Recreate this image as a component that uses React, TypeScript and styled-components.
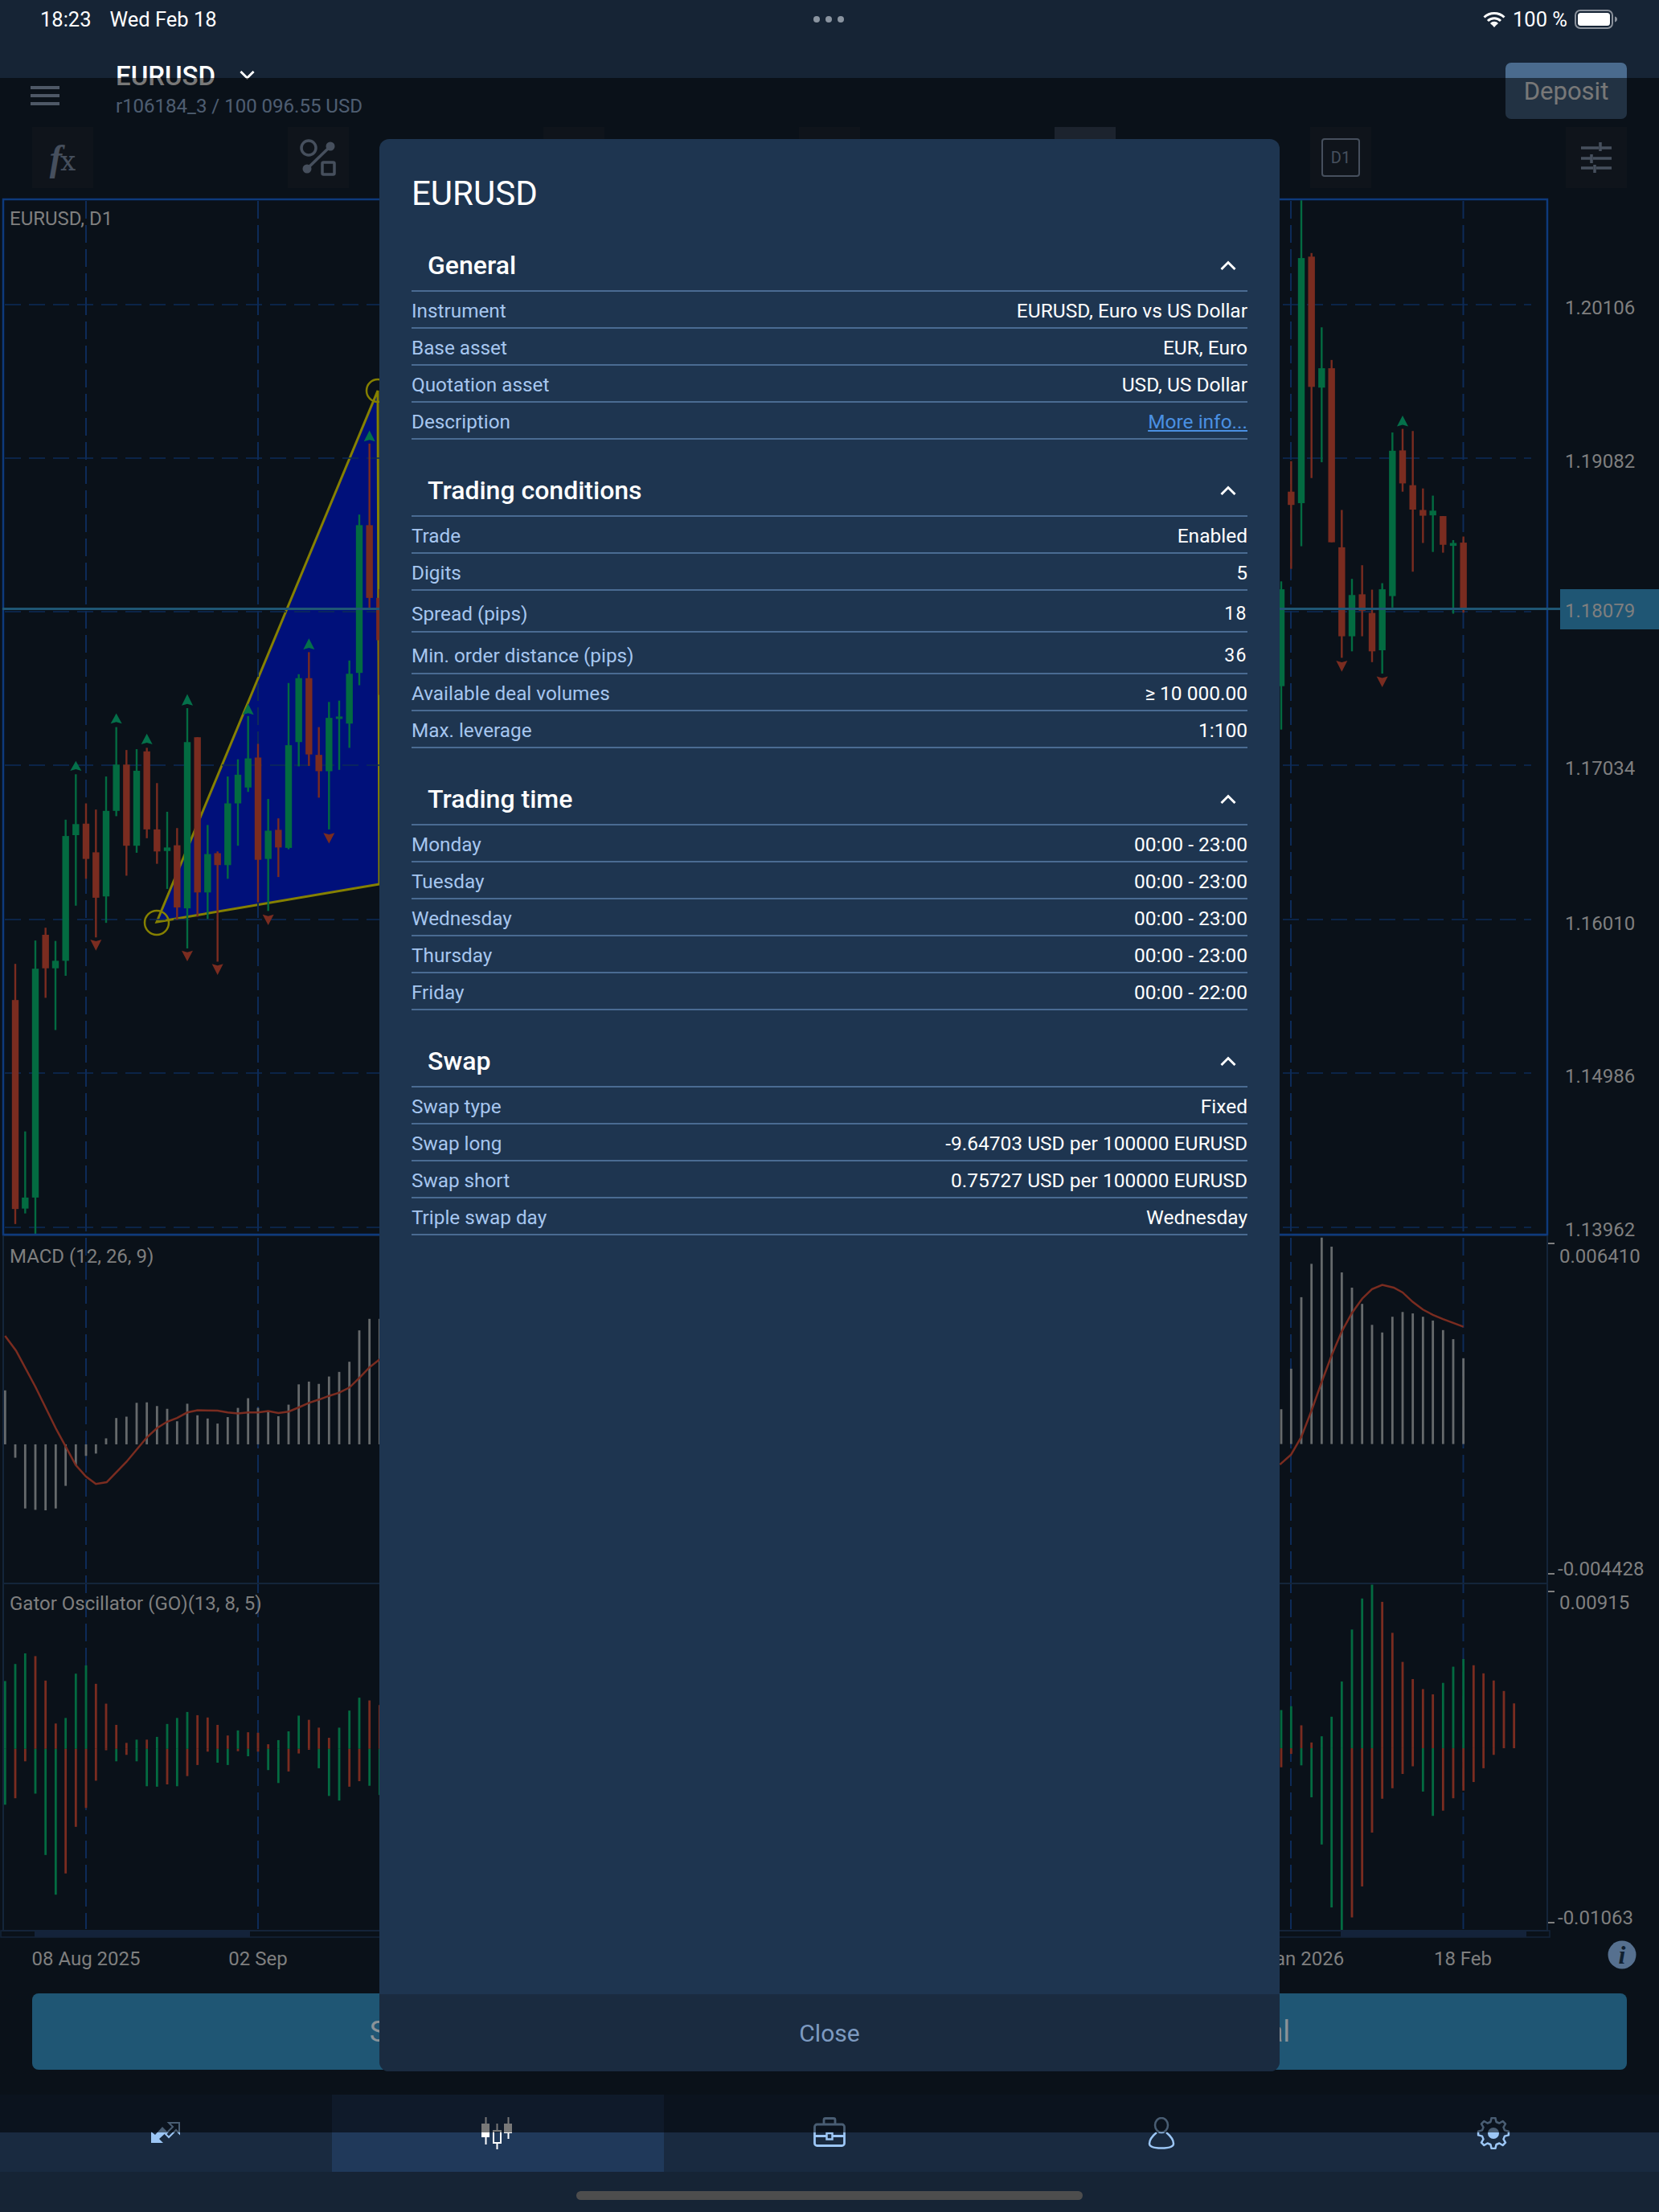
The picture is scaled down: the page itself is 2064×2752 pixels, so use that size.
import styled, { createGlobalStyle } from "styled-components";

const GlobalStyle = createGlobalStyle`
  html, body {
    margin: 0;
    padding: 0;
    background: #162435;
    font-family: Roboto, "Liberation Sans", sans-serif;
  }
  * { box-sizing: border-box; }
`;

// chart colours, already as they look under the dialog backdrop
const GREEN = "#036b41";
const RED = "#7a2c20";
const GRID = "#0d2b58";

type Candle = [number, number, number, number, number, "g" | "r"];
type Arrow = [number, number, number, "up" | "down"];
type GatorBar = [number, number, "g" | "r", number, "g" | "r"];

// the left and right series were read from separate crops, so each has its own scale
const leftX = (v: number) => v / 3;
const leftY = (v: number) => 700 + v / 1.823;
const rightX = (v: number) => 1590 + v / 3;
const rightY = (v: number) => 230 + v / 2.24;
const paneLeftY = (v: number) => 1530 + v / 1.742;
const paneRightY = (v: number) => 1500 + v / 1.686;

const leftCandles: Candle[] = [
  [57, 910, 992, 1466, 1500, "r"], [94, 1290, 1440, 1465, 1476, "g"], [132, 857, 921, 1440, 1525, "g"],
  [170, 828, 844, 920, 987, "r"], [207, 858, 903, 920, 1060, "g"], [245, 583, 620, 903, 937, "g"],
  [283, 480, 593, 618, 778, "g"], [321, 546, 592, 672, 717, "r"], [358, 560, 657, 760, 850, "r"],
  [396, 485, 563, 757, 817, "g"], [434, 373, 458, 563, 575, "g"], [472, 425, 458, 642, 710, "r"],
  [510, 423, 472, 642, 658, "g"], [548, 420, 428, 605, 625, "r"], [586, 500, 605, 655, 683, "r"],
  [624, 565, 646, 654, 740, "g"], [661, 602, 641, 782, 810, "r"], [699, 330, 407, 784, 875, "g"],
  [737, 396, 396, 748, 803, "r"], [775, 595, 661, 748, 808, "g"], [812, 655, 659, 686, 905, "r"],
  [850, 485, 546, 686, 717, "g"], [888, 446, 481, 546, 642, "g"], [926, 348, 444, 510, 520, "g"],
  [963, 411, 442, 674, 770, "r"], [1001, 536, 608, 672, 790, "g"], [1039, 580, 606, 646, 713, "r"],
  [1077, 273, 414, 647, 650, "g"], [1115, 253, 262, 407, 462, "g"], [1153, 203, 262, 435, 461, "r"],
  [1190, 373, 436, 473, 533, "r"], [1228, 316, 352, 473, 605, "g"], [1266, 313, 349, 351, 470, "g"],
  [1304, 222, 252, 365, 420, "g"], [1341, -109, -85, 250, 278, "g"], [1379, -270, -85, 80, 102, "r"],
  [1417, 60, 80, 176, 300, "r"],
];

const leftArrows: Arrow[] = [
  [283, 450, 472, "up"], [358, 855, 880, "down"], [434, 342, 365, "up"], [548, 388, 412, "up"],
  [699, 298, 324, "up"], [699, 880, 904, "down"], [812, 910, 935, "down"], [926, 320, 345, "up"],
  [1001, 798, 822, "down"], [1153, 172, 197, "up"], [1228, 613, 637, "down"], [1379, -300, -275, "up"],
];

const rightCandles: Candle[] = [
  [12, 1105, 1127, 1397, 1518, "g"], [49, 770, 855, 892, 1070, "r"], [87, 43, 204, 887, 1007, "g"],
  [125, 190, 200, 563, 817, "r"], [163, 397, 511, 565, 773, "g"], [200, 488, 511, 996, 996, "r"],
  [238, 906, 1010, 1258, 1318, "r"], [276, 1098, 1143, 1258, 1300, "g"], [314, 1060, 1141, 1187, 1258, "r"],
  [351, 1128, 1193, 1300, 1330, "r"], [389, 1110, 1127, 1297, 1362, "g"], [427, 690, 741, 1146, 1178, "g"],
  [465, 680, 740, 832, 855, "r"], [503, 686, 837, 905, 1078, "r"], [541, 846, 906, 922, 998, "r"],
  [578, 866, 908, 921, 1023, "g"], [616, 923, 923, 1003, 1025, "r"], [654, 990, 998, 1006, 1195, "g"],
  [692, 980, 997, 1180, 1192, "r"],
];

const rightArrows: Arrow[] = [
  [238, 1326, 1357, "down"], [389, 1370, 1400, "down"], [465, 643, 673, "up"],
];

const macdLeft: [number, number][] = [
  [19, 348], [57, 494], [94, 604], [132, 607], [170, 608], [208, 604], [245, 555], [283, 510], [321, 490],
  [358, 485], [396, 452], [434, 408], [472, 405], [510, 375], [548, 374], [586, 382], [624, 388], [661, 415],
  [699, 377], [737, 402], [775, 409], [812, 420], [850, 406], [888, 386], [926, 365], [963, 386], [1001, 393],
  [1039, 404], [1077, 379], [1115, 335], [1153, 329], [1190, 334], [1228, 318], [1266, 308], [1304, 286],
  [1341, 218], [1379, 193], [1417, 193],
];

const macdRight: [number, number][] = [
  [12, 427], [49, 342], [87, 192], [125, 122], [163, 67], [200, 86], [238, 140], [276, 172], [314, 206],
  [351, 250], [389, 266], [427, 233], [465, 223], [503, 226], [541, 233], [578, 241], [616, 261], [654, 280],
  [692, 320],
];

const signalLeft: [number, number][] = [
  [19, 230], [60, 262], [132, 340], [208, 430], [283, 510], [321, 535], [358, 551], [398, 547], [472, 503],
  [548, 450], [586, 430], [624, 416], [661, 408], [699, 396], [737, 391], [812, 392], [850, 396], [888, 398],
  [926, 396], [963, 396], [1001, 393], [1039, 397], [1077, 394], [1115, 385], [1153, 375], [1190, 368],
  [1228, 360], [1266, 353], [1304, 342], [1341, 321], [1379, 298], [1417, 281],
];

const signalRight: [number, number][] = [
  [7, 543], [49, 522], [87, 485], [125, 430], [163, 370], [200, 314], [238, 264], [276, 225], [314, 195],
  [351, 175], [389, 166], [432, 172], [465, 182], [503, 202], [541, 218], [578, 229], [616, 238], [654, 246],
  [692, 254],
];

const gatorLeft: GatorBar[] = [
  [19, 978, "g", 1246, "g"], [57, 941, "g", 1232, "r"], [94, 918, "g", 1152, "r"], [132, 924, "r", 1222, "g"],
  [170, 977, "r", 1355, "g"], [208, 1070, "r", 1441, "g"], [245, 1058, "g", 1395, "r"], [283, 962, "g", 1294, "r"],
  [321, 944, "g", 1253, "r"], [358, 984, "r", 1194, "r"], [396, 1027, "r", 1128, "r"], [434, 1073, "r", 1152, "g"],
  [472, 1112, "r", 1138, "r"], [510, 1105, "g", 1152, "g"], [548, 1105, "r", 1206, "g"], [586, 1099, "g", 1207, "g"],
  [624, 1071, "g", 1202, "r"], [661, 1058, "g", 1206, "g"], [699, 1045, "g", 1184, "r"], [737, 1052, "r", 1160, "r"],
  [775, 1057, "r", 1131, "r"], [812, 1073, "r", 1155, "g"], [850, 1096, "r", 1160, "g"], [888, 1085, "g", 1130, "r"],
  [926, 1089, "r", 1141, "g"], [963, 1090, "r", 1131, "r"], [1001, 1115, "r", 1171, "g"], [1039, 1106, "g", 1199, "g"],
  [1077, 1087, "g", 1174, "r"], [1115, 1053, "g", 1135, "r"], [1153, 1062, "r", 1127, "r"], [1190, 1079, "r", 1167, "g"],
  [1228, 1101, "r", 1227, "g"], [1266, 1079, "g", 1237, "g"], [1304, 1042, "g", 1207, "r"], [1341, 1014, "g", 1195, "r"],
  [1379, 1020, "r", 1205, "g"], [1417, 1030, "r", 1225, "g"],
];

const gatorRight: GatorBar[] = [
  [12, 1058, "g", 1178, "r"], [49, 1050, "g", 1150, "r"], [87, 1090, "r", 1174, "g"], [125, 1126, "r", 1241, "g"],
  [163, 1113, "g", 1340, "g"], [200, 1072, "g", 1472, "g"], [238, 998, "g", 1520, "g"], [276, 889, "g", 1493, "r"],
  [314, 824, "g", 1428, "r"], [351, 795, "g", 1315, "r"], [389, 831, "r", 1244, "r"], [427, 896, "r", 1222, "r"],
  [465, 957, "r", 1192, "r"], [503, 993, "r", 1176, "r"], [541, 1014, "r", 1229, "g"], [578, 1025, "r", 1280, "g"],
  [616, 1001, "g", 1269, "r"], [654, 967, "g", 1243, "r"], [692, 951, "g", 1227, "r"], [730, 964, "r", 1209, "r"],
  [767, 981, "r", 1180, "r"], [805, 996, "r", 1152, "r"], [843, 1018, "r", 1138, "r"], [881, 1044, "r", 1138, "r"],
];

const colorOf = (c: "g" | "r") => (c === "g" ? GREEN : RED);

const priceLabels = [
  { text: "1.20106", y: 391 },
  { text: "1.19082", y: 582 },
  { text: "1.17034", y: 964 },
  { text: "1.16010", y: 1157 },
  { text: "1.14986", y: 1347 },
  { text: "1.13962", y: 1538 },
];

const indicatorLabels = [
  { text: "0.006410", x: 1940, y: 1571, tick: 1547 },
  { text: "-0.004428", x: 1938, y: 1960, tick: 1958 },
  { text: "0.00915", x: 1940, y: 2002, tick: 1980 },
  { text: "-0.01063", x: 1938, y: 2394, tick: 2392 },
];

const sections = [
  {
    title: "General",
    rows: [
      { label: "Instrument", value: "EURUSD, Euro vs US Dollar" },
      { label: "Base asset", value: "EUR, Euro" },
      { label: "Quotation asset", value: "USD, US Dollar" },
      { label: "Description", value: "More info...", link: true },
    ],
  },
  {
    title: "Trading conditions",
    rows: [
      { label: "Trade", value: "Enabled" },
      { label: "Digits", value: "5" },
      { label: "Spread (pips)", value: "18", tall: true },
      { label: "Min. order distance (pips)", value: "36", tall: true },
      { label: "Available deal volumes", value: "≥ 10 000.00" },
      { label: "Max. leverage", value: "1:100" },
    ],
  },
  {
    title: "Trading time",
    rows: [
      { label: "Monday", value: "00:00 - 23:00" },
      { label: "Tuesday", value: "00:00 - 23:00" },
      { label: "Wednesday", value: "00:00 - 23:00" },
      { label: "Thursday", value: "00:00 - 23:00" },
      { label: "Friday", value: "00:00 - 22:00" },
    ],
  },
  {
    title: "Swap",
    rows: [
      { label: "Swap type", value: "Fixed" },
      { label: "Swap long", value: "-9.64703 USD per 100000 EURUSD" },
      { label: "Swap short", value: "0.75727 USD per 100000 EURUSD" },
      { label: "Triple swap day", value: "Wednesday" },
    ],
  },
];

function gearPath(cx: number, cy: number, outer: number, inner: number, teeth: number) {
  const pts: string[] = [];
  const step = (Math.PI * 2) / teeth;
  for (let i = 0; i < teeth; i++) {
    const a = i * step - Math.PI / 2;
    [
      [inner, a - step * 0.32],
      [outer, a - step * 0.16],
      [outer, a + step * 0.16],
      [inner, a + step * 0.32],
    ].forEach(([r, t]) => pts.push(`${(cx + r * Math.cos(t)).toFixed(1)} ${(cy + r * Math.sin(t)).toFixed(1)}`));
  }
  return `M${pts.join("L")}Z`;
}

function Candles({ data, x, y }: { data: Candle[]; x: (v: number) => number; y: (v: number) => number }) {
  return (
    <>
      {data.map(([cx, wt, bt, bb, wb, c]) => (
        <g key={cx} fill={colorOf(c)}>
          <rect x={x(cx) - 1.2} y={y(wt)} width={2.4} height={y(wb) - y(wt)} />
          <rect x={x(cx) - 4.2} y={y(bt)} width={8.4} height={Math.max(y(bb) - y(bt), 3)} />
        </g>
      ))}
    </>
  );
}

function Arrows({ data, x, y }: { data: Arrow[]; x: (v: number) => number; y: (v: number) => number }) {
  return (
    <>
      {data.map(([cx, a, b, dir]) => {
        const px = x(cx);
        const top = y(a);
        const bottom = y(b);
        const points =
          dir === "up"
            ? `${px},${top} ${px + 7},${bottom} ${px},${bottom - 2} ${px - 7},${bottom}`
            : `${px},${bottom} ${px + 7},${top} ${px},${top + 2} ${px - 7},${top}`;
        return <polygon key={`${cx}-${a}`} points={points} fill={dir === "up" ? "#04704a" : RED} />;
      })}
    </>
  );
}

function MacdBars({ data, x, y, zero }: { data: [number, number][]; x: (v: number) => number; y: (v: number) => number; zero: number }) {
  return (
    <>
      {data.map(([cx, v]) => (
        <rect key={cx} x={x(cx) - 1.4} y={Math.min(y(v), y(zero))} width={2.8} height={Math.abs(y(v) - y(zero))} fill="#666a6c" />
      ))}
    </>
  );
}

function GatorBars({ data, x, y, zero }: { data: GatorBar[]; x: (v: number) => number; y: (v: number) => number; zero: number }) {
  return (
    <>
      {data.map(([cx, up, upColor, down, downColor]) => (
        <g key={cx}>
          <rect x={x(cx) - 1.4} y={y(up)} width={2.8} height={y(zero) - y(up)} fill={colorOf(upColor)} />
          <rect x={x(cx) - 1.4} y={y(zero)} width={2.8} height={y(down) - y(zero)} fill={colorOf(downColor)} />
        </g>
      ))}
    </>
  );
}

function Chart() {
  const line = (pts: [number, number][], x: (v: number) => number, y: (v: number) => number) =>
    pts.map(([a, b]) => `${x(a).toFixed(1)},${y(b).toFixed(1)}`).join(" ");

  return (
    <ChartSvg viewBox="0 234 2064 2236" width={2064} height={2236}>
      <polygon points="195,1147 470,486 472,1100" fill="#00107a" stroke="#858000" strokeWidth={3} />
      <circle cx={470} cy={486} r={14} fill="none" stroke="#858000" strokeWidth={2.5} />
      <ellipse cx={195} cy={1148} rx={15} ry={15} fill="none" stroke="#858000" strokeWidth={2.5} />

      {[379, 570, 761, 952, 1144, 1335, 1527].map((y) => (
        <line key={y} x1={6} x2={1905} y1={y} y2={y} stroke={GRID} strokeWidth={1.5} strokeDasharray="20 10" />
      ))}
      {[107, 321, 1606, 1820.5].map((x) => (
        <line key={x} x1={x} x2={x} y1={250} y2={2400} stroke={GRID} strokeWidth={2} strokeDasharray="22 8" />
      ))}

      <Candles data={leftCandles} x={leftX} y={leftY} />
      <Candles data={rightCandles} x={rightX} y={rightY} />
      <Arrows data={leftArrows} x={leftX} y={leftY} />
      <Arrows data={rightArrows} x={rightX} y={rightY} />

      <MacdBars data={macdLeft} x={leftX} y={paneLeftY} zero={465} />
      <MacdBars data={macdRight} x={rightX} y={paneRightY} zero={500} />
      <polyline points={line(signalLeft, leftX, paneLeftY)} fill="none" stroke={RED} strokeWidth={2.5} />
      <polyline points={line(signalRight, rightX, paneRightY)} fill="none" stroke={RED} strokeWidth={2.5} />

      <GatorBars data={gatorLeft} x={leftX} y={paneLeftY} zero={1125} />
      <GatorBars data={gatorRight} x={rightX} y={paneRightY} zero={1138} />

      <rect x={4} y={1537} width={1921} height={433} fill="none" stroke="#14253a" strokeWidth={2} />
      <rect x={4} y={1970} width={1921} height={432} fill="none" stroke="#14253a" strokeWidth={2} />
      <rect x={4} y={248} width={1921} height={1288} fill="none" stroke="#0e3a7c" strokeWidth={2.5} />

      <rect x={1} y={2402} width={1927} height={8} fill="none" stroke="#14253a" strokeWidth={1.5} />
      <rect x={43} y={2402} width={268} height={8} fill="#14233a" />
      <rect x={1668} y={2402} width={231} height={8} fill="#14233a" />

      <rect x={3} y={756} width={1940} height={3} fill="#1f5674" />
      <rect x={1941} y={733} width={123} height={50} fill="#1f5674" />

      <ChartText x={12} y={280}>EURUSD, D1</ChartText>
      <ChartText x={12} y={1571}>MACD (12, 26, 9)</ChartText>
      <ChartText x={12} y={2003}>Gator Oscillator (GO)(13, 8, 5)</ChartText>

      {priceLabels.map((p) => (
        <ChartText key={p.text} x={1947} y={p.y}>{p.text}</ChartText>
      ))}
      <ChartText x={1947} y={768}>1.18079</ChartText>
      {indicatorLabels.map((p) => (
        <g key={p.text}>
          <rect x={1926} y={p.tick - 1} width={8} height={2} fill="#7f7f7f" />
          <ChartText x={p.x} y={p.y}>{p.text}</ChartText>
        </g>
      ))}

      <ChartText x={107} y={2445} textAnchor="middle">08 Aug 2025</ChartText>
      <ChartText x={321} y={2445} textAnchor="middle">02 Sep</ChartText>
      <ChartText x={1606} y={2445} textAnchor="middle">27 Jan 2026</ChartText>
      <ChartText x={1820} y={2445} textAnchor="middle">18 Feb</ChartText>

      <circle cx={2018} cy={2432} r={17.5} fill="#56708f" />
      <InfoGlyph x={2018} y={2443} textAnchor="middle">i</InfoGlyph>
    </ChartSvg>
  );
}

function WifiIcon() {
  return (
    <svg width="28" height="20" viewBox="0 0 28 20" fill="none" stroke="#fff" strokeWidth="3">
      <path d="M1.5 7.5a18 18 0 0 1 25 0" />
      <path d="M6 12a11.5 11.5 0 0 1 16 0" />
      <path d="M10 16a5.6 5.6 0 0 1 8 0" />
      <path d="M14 20l-3.2-3.4a4.6 4.6 0 0 1 6.4 0z" fill="#fff" stroke="none" />
    </svg>
  );
}

function BatteryIcon() {
  return (
    <svg width="53" height="24" viewBox="0 0 53 24">
      <rect x="1" y="1" width="46" height="22" rx="6" fill="none" stroke="#8b929c" strokeWidth="2" />
      <rect x="4" y="4" width="40" height="16" rx="3.5" fill="#fff" />
      <path d="M50 8.5c2 .6 3 1.9 3 3.5s-1 2.900-3 3.500z" fill="#8b929c" />
    </svg>
  );
}

function MenuIcon() {
  return (
    <svg width="36" height="24" viewBox="0 0 36 24" fill="#a6bcd8">
      <rect width="36" height="4" />
      <rect y="10" width="36" height="4" />
      <rect y="20" width="36" height="4" />
    </svg>
  );
}

function Chevron({ up, width = 20 }: { up?: boolean; width?: number }) {
  return (
    <svg width={width} height={width * 0.6} viewBox="0 0 20 12" fill="none" stroke="#fff" strokeWidth="3">
      <path d={up ? "M1.500 11L10 2.500 18.500 11" : "M1.500 1L10 9.500 18.500 1"} />
    </svg>
  );
}

function ObjectsIcon() {
  return (
    <svg width="62" height="46" viewBox="0 0 62 46" fill="none" stroke="#95a9c5" strokeWidth="3.5">
      <circle cx="19" cy="11" r="9" />
      <circle cx="46" cy="9" r="5.500" fill="#95a9c5" stroke="none" />
      <circle cx="17" cy="37" r="5.500" fill="#95a9c5" stroke="none" />
      <path d="M46 9L17 37" />
      <rect x="36" y="29" width="15" height="15" rx="1.500" />
    </svg>
  );
}

function SlidersIcon() {
  return (
    <svg width="38" height="38" viewBox="0 0 38 38" fill="none" stroke="#95a9c5" strokeWidth="3.5">
      <path d="M0 7h22M24 7h14M24 0v11" />
      <path d="M0 20h12M15 20h23M13 15v11" />
      <path d="M0 32h15M19 32h19M17 28v10" />
    </svg>
  );
}

function TransferIcon() {
  return (
    <svg width="40" height="40" viewBox="11 9 40 40">
      <path d="M13 27L18 31L27 21L33 27L23 36L28 41H13Z" fill="#9cc6f5" />
      <path d="M35 16H48V29L44 25L35 34L31 30L40 21Z" fill="none" stroke="#9cc6f5" strokeWidth="2" />
    </svg>
  );
}

function CandlesIcon() {
  return (
    <svg width="42" height="40" viewBox="0 0 42 40" fill="#fff">
      <rect x="5.500" y="0" width="2" height="34" />
      <rect x="1" y="8" width="10" height="17" />
      <rect x="19.500" y="8" width="2" height="32" />
      <rect x="16" y="17" width="9" height="15" fill="#20395a" stroke="#fff" strokeWidth="2" />
      <rect x="33.500" y="0" width="2" height="27" />
      <rect x="29" y="8" width="10" height="12" />
    </svg>
  );
}

function BriefcaseIcon() {
  return (
    <svg width="42" height="40" viewBox="11 9 42 40" fill="none" stroke="#9cc6f5" strokeWidth="2.800">
      <path d="M25 18V12.500a2 2 0 0 1 2-2h10a2 2 0 0 1 2 2V18" />
      <rect x="13.500" y="18" width="37" height="26.500" rx="3" />
      <path d="M13.500 32.500H28M36 32.500H50.500" />
      <rect x="28.500" y="29" width="7" height="7.500" strokeWidth="2.500" />
    </svg>
  );
}

function PersonIcon() {
  return (
    <svg width="34" height="40" viewBox="0 0 34 40" fill="none" stroke="#9cc6f5" strokeWidth="2.500">
      <ellipse cx="17" cy="10" rx="8" ry="9" />
      <path d="M11 19C5 24 2 29 2 33c0 4 6 5.500 15 5.500S32 37 32 33c0-4-3-9-9-14" />
    </svg>
  );
}

function GearIcon() {
  return (
    <svg width="42" height="40" viewBox="0 0 42 40" fill="none">
      <path d={gearPath(21, 20, 19, 14.5, 8)} stroke="#9cc6f5" strokeWidth="2.500" strokeLinejoin="round" />
      <circle cx="21" cy="20" r="7" fill="#9cc6f5" />
    </svg>
  );
}

export default function App() {
  const tabs = [
    { id: "quotes", icon: <TransferIcon /> },
    { id: "chart", icon: <CandlesIcon />, active: true },
    { id: "trade", icon: <BriefcaseIcon /> },
    { id: "account", icon: <PersonIcon /> },
    { id: "settings", icon: <GearIcon /> },
  ];

  return (
    <Page>
      <GlobalStyle />
      <StatusBar>
        <StatusLeft>
          <span>18:23</span>
          <span>Wed Feb 18</span>
        </StatusLeft>
        <StatusDots>
          <i />
          <i />
          <i />
        </StatusDots>
        <StatusRight>
          <WifiIcon />
          <span>100 %</span>
          <BatteryIcon />
        </StatusRight>
      </StatusBar>

      <Header>
        <MenuButton>
          <MenuIcon />
        </MenuButton>
        <AccountBlock>
          <SymbolRow>
            EURUSD
            <Chevron width={19} />
          </SymbolRow>
          <AccountLine>r106184_3 / 100 096.55 USD</AccountLine>
        </AccountBlock>
        <DepositButton>Deposit</DepositButton>
      </Header>

      <Toolbar>
        <ToolButton>
          <FxGlyph>
            f<FxX>x</FxX>
          </FxGlyph>
        </ToolButton>
        <ToolButton>
          <ObjectsIcon />
        </ToolButton>
        <ToolButton />
        <ToolButton />
        <ToolButton $active />
        <ToolButton>
          <PeriodBadge>D1</PeriodBadge>
        </ToolButton>
        <ToolButton>
          <SlidersIcon />
        </ToolButton>
      </Toolbar>

      <Chart />

      <ActionRow>
        <ActionButton>Sell deal</ActionButton>
        <ActionButton>Buy deal</ActionButton>
      </ActionRow>

      <TabBar>
        {tabs.map((tab) => (
          <Tab key={tab.id} $active={tab.active}>
            {tab.icon}
          </Tab>
        ))}
      </TabBar>
      <HomeArea>
        <HomeIndicator />
      </HomeArea>

      <Backdrop />

      <Dialog>
        <DialogBody>
          <DialogTitle>EURUSD</DialogTitle>
          {sections.map((section) => (
            <section key={section.title}>
              <SectionHead>
                {section.title}
                <Chevron up width={20} />
              </SectionHead>
              {section.rows.map((row) => (
                <Row key={row.label} $tall={row.tall}>
                  <RowLabel>{row.label}</RowLabel>
                  <RowValue $link={row.link} $spaced={row.tall}>
                    {row.value}
                  </RowValue>
                </Row>
              ))}
            </section>
          ))}
        </DialogBody>
        <DialogFooter>Close</DialogFooter>
      </Dialog>
    </Page>
  );
}

const Page = styled.div`
  position: relative;
  display: flex;
  flex-direction: column;
  width: 2064px;
  height: 2752px;
  overflow: hidden;
  background: #162435;
  color: #fff;
`;

const StatusBar = styled.div`
  display: grid;
  grid-template-columns: 1fr auto 1fr;
  align-items: center;
  height: 48px;
  padding: 0 52px 0 50px;
  font-size: 25.500px;
  position: relative;
  z-index: 4;
`;

const StatusLeft = styled.div`
  display: flex;
  gap: 23px;
`;

const StatusDots = styled.div`
  display: flex;
  gap: 7px;

  i {
    width: 8px;
    height: 8px;
    border-radius: 50%;
    background: #8a94a0;
  }
`;

const StatusRight = styled.div`
  display: flex;
  align-items: center;
  justify-content: flex-end;
  gap: 9px;
`;

const Header = styled.header`
  display: flex;
  align-items: flex-start;
  height: 110px;
  padding: 30px 40px 0 38px;
`;

const MenuButton = styled.div`
  width: 106px;
  margin-top: 29px;
  line-height: 0;
`;

const AccountBlock = styled.div`
  flex: 1;
`;

const SymbolRow = styled.div`
  display: flex;
  align-items: center;
  gap: 30px;
  height: 32px;
  font-size: 33px;
  font-weight: 500;
`;

const AccountLine = styled.div`
  margin-top: 7px;
  font-size: 24px;
  line-height: 30px;
  color: #a6c6ef;
`;

const DepositButton = styled.button`
  width: 151px;
  height: 70px;
  padding-top: 2px;
  border: 0;
  border-radius: 7px;
  background: #4a6b8e;
  color: #fff;
  font-family: inherit;
  font-size: 31px;
`;

const Toolbar = styled.div`
  display: flex;
  justify-content: space-between;
  height: 76px;
  padding: 0 40px;
`;

const ToolButton = styled.div<{ $active?: boolean }>`
  display: flex;
  align-items: center;
  justify-content: center;
  width: 76px;
  height: 76px;
  background: ${(p) => (p.$active ? "#3c4c62" : "#212c3a")};
`;

const FxGlyph = styled.span`
  font-family: "Liberation Serif", serif;
  font-style: italic;
  font-weight: 700;
  font-size: 46px;
  color: #95a9c5;
`;

const FxX = styled.span`
  margin-left: -2px;
  font-family: "DejaVu Serif", serif;
  font-style: normal;
  font-weight: 400;
  font-size: 34px;
`;

const PeriodBadge = styled.div`
  display: flex;
  align-items: center;
  justify-content: center;
  width: 48px;
  height: 48px;
  border: 2.500px solid #95a9c5;
  border-radius: 4px;
  font-size: 20px;
  color: #95a9c5;
`;

const ChartSvg = styled.svg`
  display: block;
  position: relative;
  z-index: 2;
  flex: none;
  background: #0a1119;
`;

const ChartText = styled.text`
  font-family: Roboto, "Liberation Sans", sans-serif;
  font-size: 24px;
  fill: #7f7f7f;
`;

const InfoGlyph = styled.text`
  font-family: "Liberation Serif", serif;
  font-style: italic;
  font-weight: 700;
  font-size: 32px;
  fill: #10202f;
`;

const ActionRow = styled.div`
  position: relative;
  z-index: 2;
  display: flex;
  gap: 36px;
  height: 95px;
  margin-top: 10px;
  padding: 0 40px;
`;

const ActionButton = styled.button`
  flex: 1;
  border: 0;
  border-radius: 8px;
  background: #1f5674;
  color: #8a9298;
  font-family: inherit;
  font-size: 36px;
`;

const TabBar = styled.nav`
  display: grid;
  grid-template-columns: repeat(5, 1fr);
  height: 96px;
  margin-top: auto;
  background: #192a40;
`;

const Tab = styled.div<{ $active?: boolean }>`
  display: flex;
  justify-content: center;
  padding-top: 28px;
  background: ${(p) => (p.$active ? "#20395a" : "transparent")};
`;

const HomeArea = styled.div`
  display: flex;
  justify-content: center;
  height: 50px;
  padding-top: 24px;
`;

const HomeIndicator = styled.div`
  width: 630px;
  height: 11px;
  border-radius: 6px;
  background: #4d4d4d;
`;

const Backdrop = styled.div`
  position: absolute;
  top: 97px;
  left: 0;
  right: 0;
  bottom: 99px;
  z-index: 1;
  background: rgba(0, 0, 0, 0.53);
`;

const Dialog = styled.div`
  position: absolute;
  top: 173px;
  left: 472px;
  z-index: 3;
  display: flex;
  flex-direction: column;
  width: 1120px;
  height: 2404px;
  border-radius: 12px;
  overflow: hidden;
  background: #1e3550;
`;

const DialogBody = styled.div`
  flex: 1;
  padding: 0 40px;
`;

const DialogTitle = styled.h2`
  display: flex;
  align-items: center;
  height: 126px;
  margin: 0 0 -32px;
  padding-top: 8px;
  font-size: 42px;
  font-weight: 400;
`;

const SectionHead = styled.div`
  display: flex;
  align-items: center;
  justify-content: space-between;
  height: 64px;
  margin-top: 32px;
  padding: 0 14px 0 20px;
  border-bottom: 2px solid #4a6b92;
  font-size: 32px;
  font-weight: 500;
`;

const Row = styled.div<{ $tall?: boolean }>`
  display: flex;
  align-items: center;
  justify-content: space-between;
  height: ${(p) => (p.$tall ? "52px" : "46px")};
  padding-top: ${(p) => (p.$tall ? "6px" : "2px")};
  border-bottom: 2px solid #4a6b92;
  font-size: 24.300px;
`;

const RowLabel = styled.span`
  color: #a6c6ef;
`;

const RowValue = styled.span<{ $link?: boolean; $spaced?: boolean }>`
  color: ${(p) => (p.$link ? "#4a90e2" : "#fff")};
  text-decoration: ${(p) => (p.$link ? "underline" : "none")};
  letter-spacing: ${(p) => (p.$spaced ? "1.500px" : "normal")};
  font-size: ${(p) => (p.$spaced ? "23px" : "24.500px")};
`;

const DialogFooter = styled.div`
  display: flex;
  align-items: center;
  justify-content: center;
  height: 96px;
  background: #1a2b40;
  color: #7d9ac0;
  font-size: 30px;
`;
